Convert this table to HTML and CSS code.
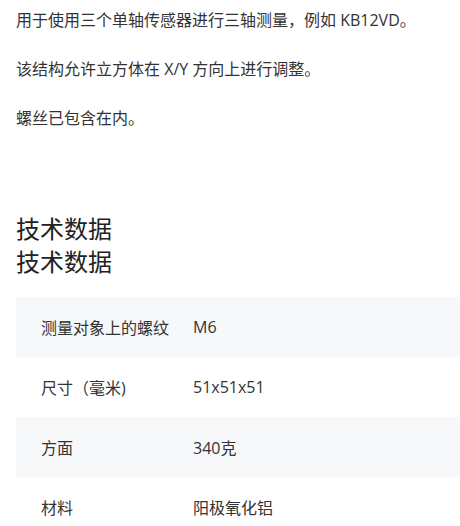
FILE: index.html
```html
<!DOCTYPE html>
<html lang="zh-CN">
<head>
<meta charset="UTF-8">
<meta name="viewport" content="width=device-width, initial-scale=1.0">
<title>技术数据</title>
<link rel="stylesheet" href="styles.css">
</head>
<body>
    <div class="content">
        <p>用于使用三个单轴传感器进行三轴测量，例如 KB12VD。</p>
        <p>该结构允许立方体在 X/Y 方向上进行调整。</p>
        <p>螺丝已包含在内。</p>

        <h2 class="section-title">技术数据<br>技术数据</h2>

        <table class="specs">
            <tr>
                <td>测量对象上的螺纹</td>
                <td>M6</td>
            </tr>
            <tr>
                <td>尺寸（毫米)</td>
                <td>51x51x51</td>
            </tr>
            <tr>
                <td>方面</td>
                <td>340克</td>
            </tr>
            <tr>
                <td>材料</td>
                <td>阳极氧化铝</td>
            </tr>
        </table>
    </div>
</body>
</html>
```

FILE: styles.css
```css
body {
    margin: 0;
    font-family: "Open Sans", "Noto Sans CJK SC", sans-serif;
    color: #333;
    background: #fff;
}
.content {
    padding: 8px 0 0 16px;
}
p {
    margin: 0 0 25px;
    font-size: 16px;
    line-height: 24px;
}
.section-title {
    margin: 82px 0 19px;
    font-size: 24px;
    line-height: 33px;
    font-weight: normal;
    color: #222;
}
.specs {
    width: 100%;
    border-collapse: collapse;
    font-size: 16px;
}
.specs td {
    height: 60px;
    padding: 0 12px;
    white-space: nowrap;
}
.specs td:first-child {
    width: 1px;
    padding-left: 25px;
}
.specs tr:nth-child(odd) {
    background: #f7f8fa;
}
```
